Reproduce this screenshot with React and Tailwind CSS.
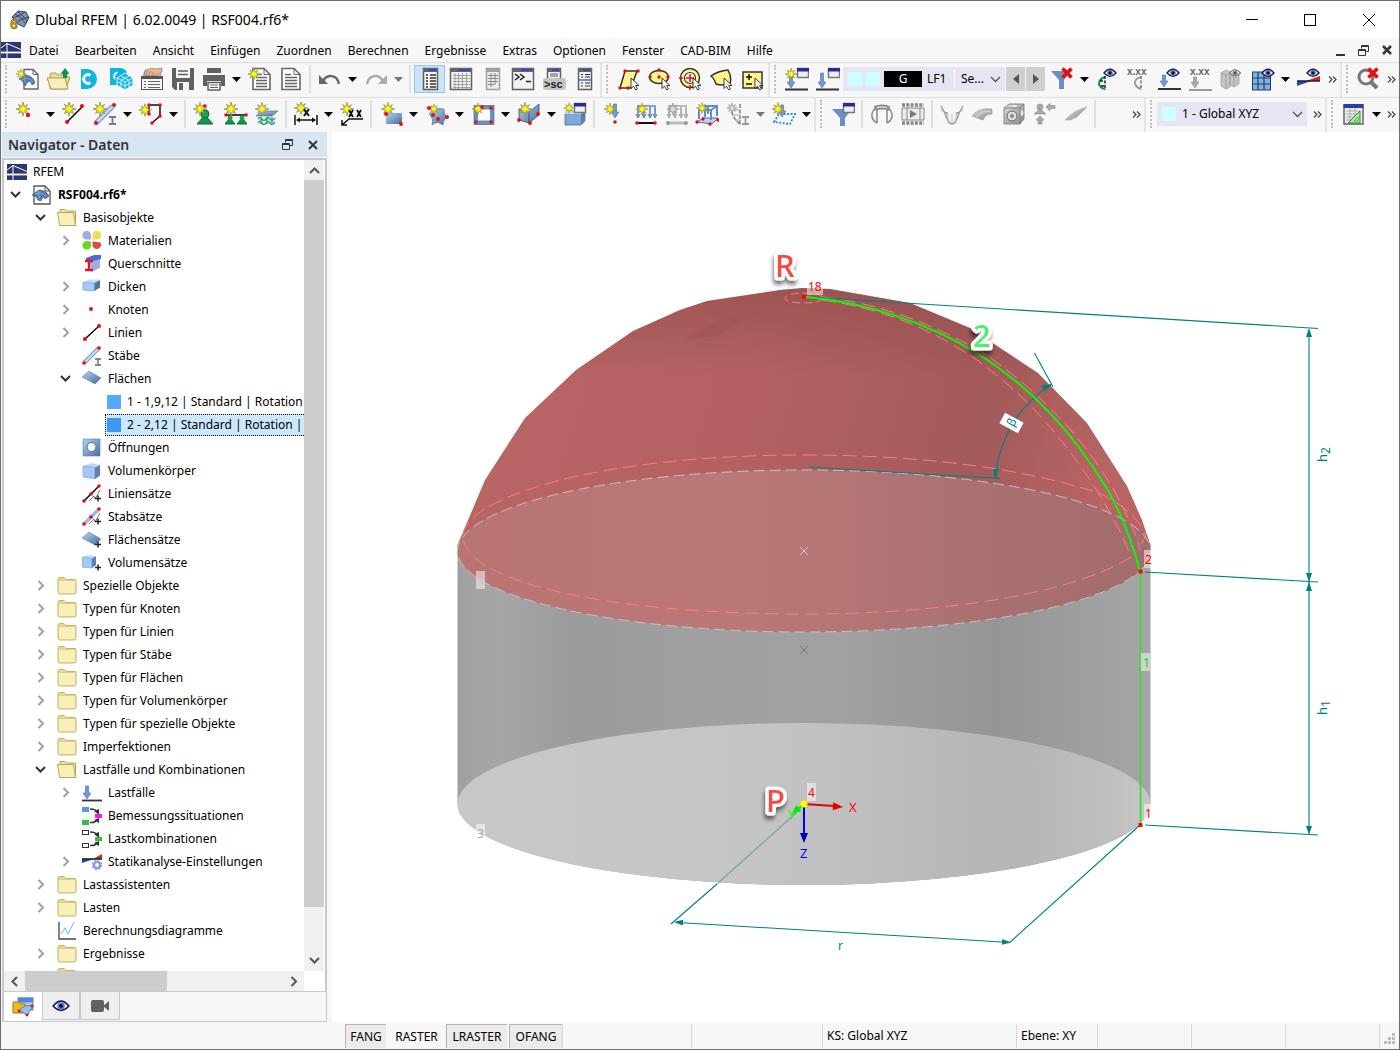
import React, { useState } from 'react';

const BLUE = 'url(#blue)';
const GRAY = 'url(#gray)';

/* ---------- shared icon parts ---------- */

const Star = ({ x = 7, y = 7, s = 1, gray }) => (
  <g transform={`translate(${x} ${y}) scale(${s})`}>
    <path
      d="M0-7.500 1.100-2.800 4.800-4.800 2.800-1.100 7.500 0 2.800 1.100 4.800 4.800 1.100 2.800 0 7.500-1.100 2.800-4.800 4.800-2.800 1.100-7.500 0-2.800-1.100-4.800-4.800-1.100-2.800Z"
      fill={gray ? '#c8c8c8' : '#e8df30'}
      stroke={gray ? '#8a8a8a' : '#8a8a4c'}
      strokeWidth=".8"
    />
    <path d="M0-4 1.300-1.300 4 0 1.300 1.300 0 4-1.300 1.300-4 0-1.300-1.300Z" fill={gray ? '#ddd' : '#ffff00'} />
  </g>
);

const Dots = ({ at, c = '#e80c0c', r = 2 }) => at.map(([x, y]) => <circle key={`${x}-${y}`} cx={x} cy={y} r={r} fill={c} />);

const MiniWin = ({ x = 13, y = 1 }) => (
  <g>
    <rect x={x + 0.5} y={y + 0.5} width="11" height="9" fill="#eee" stroke="#777" strokeWidth="1.500" />
    <rect x={x} y={y} width="12" height="3.500" fill="#2a2a9c" />
  </g>
);

const Eye = ({ x = 15, y = 6, s = 1, gray }) => (
  <g transform={`translate(${x} ${y}) scale(${s})`}>
    <path d="M-6 0Q0-7.5 6 0Q0 6.5-6 0Z" fill="#fff" stroke={gray ? '#7d7d7d' : '#1c1c5e'} strokeWidth="1.4" />
    <circle r="2.9" fill={gray ? '#8b8b8b' : '#5b78c8'} />
    <circle r="1.4" fill={gray ? '#555' : '#000'} />
  </g>
);

const Pointer = ({ x = 14, y = 11 }) => (
  <path transform={`translate(${x} ${y})`} d="M0 0V10.5L2.6 8.2 4.6 12 6.4 11 4.6 7.5H8Z" fill="#fff" stroke="#111" strokeWidth=".8" />
);

const Down = ({ x = 8, y1 = 5, y2 = 20, gray }) => (
  <path
    d={`M${x - 1.5} ${y1}h3V${y2 - 6}h2.4L${x} ${y2}l-3.9-6h2.4Z`}
    fill={gray ? '#aaa' : '#6f9ad4'}
    stroke={gray ? '#888' : '#4a6faa'}
    strokeWidth=".6"
  />
);

const IBeam = ({ x = 17, y = 14, c = '#6b7f9c' }) => (
  <path d={`M${x} ${y + 1}h7M${x} ${y + 8}h7M${x + 3.5} ${y + 1}v7`} stroke={c} strokeWidth="1.8" fill="none" />
);

const Page = ({ x = 3, y = 2, w = 18 }) => (
  <g stroke="#666" fill="none">
    <path d={`M${x} ${y}h${w - 6}l6 6v15h-${w}Z`} fill="#fff" strokeWidth="1.6" />
    <path d={`M${x + w - 6} ${y}v6h6`} />
    <path d={`M${x + 3} ${y + 6}h6M${x + 3} ${y + 9}h${w - 6}M${x + 3} ${y + 12}h${w - 6}M${x + 3} ${y + 15}h${w - 6}M${x + 3} ${y + 18}h${w - 6}`} strokeWidth="1.3" />
  </g>
);

const Win = ({ x = 1, w = 22, h = 22, gray, children }) => (
  <g>
    <rect x={x + 0.5} y="1.5" width={w - 1} height={h - 1} fill={gray ? '#ececec' : '#f2f2f2'} stroke={gray ? '#a0a0a0' : '#606060'} strokeWidth="1.500" />
    <rect x={x} y="1" width={w} height="4" fill={gray ? '#a0a0a0' : '#666'} />
    {!gray && <rect x={x + w / 2 - 2} y="2" width={w / 2} height="2" fill="#3344d8" />}
    {children}
  </g>
);

const RedX = ({ x = 16, y = 6 }) => (
  <path d={`M${x - 4.5} ${y - 4.5}l9 9M${x + 4.5} ${y - 4.5}l-9 9`} stroke="#e60e0e" strokeWidth="3.6" />
);

const Funnel = ({ y = 4 }) => <path d={`M1 ${y}H21L14 ${y + 9}V${y + 18}H9V${y + 9}Z`} fill="#6b8fc4" />;

/* ---------- toolbar icons, 24 x 24 ---------- */

const icons = {
  newModel: (
    <g>
      <path d="M8 2.500h9l5 5V22H8Z" fill="#fff" stroke="#666" strokeWidth="1.4" />
      <path d="M17 2.500v5h5" fill="none" stroke="#666" />
      <path d="M3 12 10 8Q17 9 19 16L16 18 15 15Q13 13 11 16L9 19 7 15Q5 12 3 12Z" fill="#4d7cb0" stroke="#274a74" strokeWidth=".6" />
      <path d="M6 13Q12 9 17 15M9 9Q7 12 10 17" fill="none" stroke="#8fb4dc" strokeWidth=".7" />
      <Star x={5} y={7} s={0.7} />
    </g>
  ),
  open: (
    <g>
      <path d="M3 8V22H19L23 10H20V8H11L9 6H4Z" fill="#e9dc9a" stroke="#a89a4c" />
      <path d="M0 11H18L21 22H4Z" fill="#f7efb8" stroke="#a89a4c" />
      <path d="M16 11V7H13.500L18 1l4.500 6H20V11Z" fill="#0b9242" />
    </g>
  ),
  dlubal: (
    <g>
      <path d="M3 2H9A10 10 0 0 1 9 22H3Z" fill="#0db5e0" />
      <path d="M12.500 8.500A4.300 4.300 0 1 0 12.500 15.500" fill="none" stroke="#fff" strokeWidth="2.800" />
    </g>
  ),
  dlubalCube: (
    <g>
      <path d="M1 1H12Q17 2 18 6L12 14V18H1Z" fill="#0db5e0" />
      <path d="M8.500 5.500A4 4 0 0 0 6 12" fill="none" stroke="#fff" strokeWidth="2" />
      <path d="M16 6 20 8.500 24 11V18L16 23 8 18V11Z" fill="#0db5e0" stroke="#fff" strokeWidth=".8" />
      <path d="M8 11l8 4 8-4M16 15v8M12 9l8 4.500v7M20 9l-8 4.500v7M8 14.500l8 4.500 8-4.500" fill="none" stroke="#fff" strokeWidth=".8" />
    </g>
  ),
  manager: (
    <g>
      <path d="M3 10 5 3h15l1 7Z" fill="#a9c2df" stroke="#667" strokeWidth=".5" />
      <path d="M4 8C5 3 10 0 16 2L22 1V5L17 8 11 9Z" fill="#e8b899" stroke="#9a6a50" strokeWidth=".6" />
      <path d="M8 4l-2 4M11 4l-2 4M14 5l-2 3" stroke="#9a6a50" strokeWidth=".7" />
      <rect x="1.500" y="9.500" width="21" height="13" fill="#f4f4f4" stroke="#555" />
      <rect x="1" y="9" width="22" height="3" fill="#555" />
      <path d="M4 14.500h2M4 17.500h2M4 20.500h2M8 14.500h12M8 17.500h12M8 20.500h12" stroke="#666" strokeWidth="1.200" />
    </g>
  ),
  save: (
    <g>
      <path d="M1 1H4V12H20V1H23V23H4L1 20Z" fill="#606060" />
      <path d="M4 1H20V12H4Z" fill="#606060" />
      <rect x="5" y="1" width="14" height="10" fill="#f6f6f6" />
      <path d="M7 4h10M7 7.500h10" stroke="#606060" strokeWidth="1.600" />
      <rect x="6" y="15" width="12" height="8" fill="#f6f6f6" />
      <rect x="8" y="16" width="4" height="7" fill="#606060" />
    </g>
  ),
  print: (
    <g fill="#606060">
      <rect x="5" y="1" width="14" height="5" />
      <path d="M1 8H23V19H19V14H5V19H1Z" />
      <path d="M6 15.500H18V23H6Z" fill="#fff" stroke="#606060" strokeWidth="1.500" />
      <path d="M8 18h8M8 20.500h8" stroke="#606060" />
    </g>
  ),
  newReport: (
    <g>
      <Page x={5} y={1.500} w={17} />
      <Star x={6} y={7} s={0.85} />
    </g>
  ),
  report: <Page x={3} y={1.500} w={18} />,
  undo: (
    <g>
      <path d="M5 14C9 7 19 7 21 17" fill="none" stroke="#666" strokeWidth="2.400" />
      <path d="M1 8V17H10Z" fill="#666" />
    </g>
  ),
  redo: (
    <g>
      <path d="M19 14C15 7 5 7 3 17" fill="none" stroke="#aaa" strokeWidth="2.400" />
      <path d="M23 8V17H14Z" fill="#aaa" />
    </g>
  ),
  winNav: (
    <Win x={5} w={15}>
      <path d="M8 8h2M8 11h2M8 14h2M8 17h2M8 20h2M12 8h6M12 11h6M12 14h6M12 17h6M12 20h6" stroke="#333" strokeWidth="1.300" />
    </Win>
  ),
  winTable: (
    <Win>
      <path d="M4 8.500h17M4 11.500h17M4 14.500h17M4 17.500h17M4 20.500h17M6 6v16M9.500 6v16M13.500 6v16M17.500 6v16" stroke="#999" strokeWidth=".9" />
    </Win>
  ),
  winGray: (
    <Win x={6} w={14} gray>
      <path d="M8 8.500h10M8 11.500h10M8 14.500h10M8 17.500h6M11 6v14M15 6v12" stroke="#888" />
    </Win>
  ),
  winConsole: (
    <Win>
      <path d="M4 7l4 3-4 3M9 7l4 3-4 3M15 14.500h5" fill="none" stroke="#222" strokeWidth="1.500" />
    </Win>
  ),
  winScript: (
    <g>
      <Win x={5} w={14} h={18}>
        <path d="M8 7h8M8 9h8" stroke="#555" />
      </Win>
      <rect x="1" y="11" width="23" height="12" rx="3" fill="#c4c4c4" />
      <text x="2" y="21" fontSize="11" fontWeight="700" fontFamily="Liberation Sans, sans-serif" fill="#222">&gt;sc</text>
    </g>
  ),
  winList: (
    <Win x={5} w={14}>
      <path d="M8 7.500h2M8 10h2M8 16h2M8 19h2M12 7.500h5M12 10h5M12 16h5M12 19h5" stroke="#333" strokeWidth="1.200" />
      <path d="M5 13h14" stroke="#3a6ad0" strokeWidth="1.500" />
    </Win>
  ),
  selRhomb: (
    <g>
      <path d="M3 21 8 4H20L14 21Z" fill="#fdf58c" stroke="#333" strokeWidth="1.500" />
      <Dots at={[[3, 21], [8, 4], [21, 4], [11, 21]]} r={1.7} />
      <Pointer />
    </g>
  ),
  selEllipse: (
    <g>
      <ellipse cx="11" cy="10" rx="9.500" ry="6.500" fill="#fdf58c" stroke="#333" strokeWidth="1.500" />
      <Dots at={[[2, 10], [11, 3], [11, 10], [20, 10]]} r={1.7} />
      <Pointer />
    </g>
  ),
  selRing: (
    <g>
      <circle cx="11" cy="11" r="9.500" fill="#fdf58c" stroke="#333" strokeWidth="1.500" />
      <circle cx="11" cy="11" r="5.500" fill="#fff" stroke="#333" strokeWidth="1.200" />
      <path d="M7 11h8M11 7v8M0 11h4M11 18v5" stroke="#e80c0c" strokeWidth="1.500" />
      <Pointer />
    </g>
  ),
  selLasso: (
    <g>
      <path d="M1 9Q8 4 18 3Q22 10 20 17Q12 19 6 17Q4 11 1 9Z" fill="#fdf58c" stroke="#333" strokeWidth="1.500" />
      <Pointer />
    </g>
  ),
  selCalc: (
    <g>
      <rect x="2" y="5" width="19" height="16" fill="#fdf58c" stroke="#333" strokeWidth="1.500" />
      <path d="M5 10h6M8 7v6M5 17h6" stroke="#111" strokeWidth="1.500" />
      <Pointer />
    </g>
  ),
  newLoadCase: (
    <g>
      <MiniWin x={12} y={1} />
      <Down x={6} y1={6} y2={21} />
      <Star x={6} y={7} s={0.8} />
      <rect x="0" y="21.500" width="23" height="2" fill="#333" />
    </g>
  ),
  loadCase: (
    <g>
      <MiniWin x={12} y={1} />
      <Down x={6} y1={6} y2={21} />
      <rect x="0" y="21.500" width="23" height="2" fill="#333" />
    </g>
  ),
  filterOff: (
    <g>
      <Funnel />
      <RedX x={17} y={6} />
    </g>
  ),
  showResult: (
    <g>
      <path d="M9 10Q3 12 3 17Q4 21 9 22" fill="none" stroke="#0b9242" strokeWidth="2" />
      <path d="M9 9V23M4 14h5M5 19h4" stroke="#222" strokeWidth="1.500" strokeDasharray="3 1.500" />
      <Eye x={14} y={6} />
    </g>
  ),
  xxxResult: (
    <g>
      <text x="0" y="8" fontSize="10" fontWeight="700" fontFamily="Liberation Sans, sans-serif" fill="#666">x.xx</text>
      <path d="M14 10Q7 12 8 17Q10 21 14 22" fill="none" stroke="#999" strokeWidth="1.800" />
      <path d="M14 9V23" stroke="#777" strokeWidth="1.600" strokeDasharray="3 1.500" />
    </g>
  ),
  showLoads: (
    <g>
      <Down x={6} y1={8} y2={20} />
      <Eye x={15} y={6} />
      <rect x="0" y="21" width="23" height="2" fill="#333" />
    </g>
  ),
  xxxLoads: (
    <g>
      <text x="1" y="8" fontSize="10" fontWeight="700" fontFamily="Liberation Sans, sans-serif" fill="#666">x.xx</text>
      <Down x={6} y1={10} y2={21} gray />
      <rect x="0" y="22" width="23" height="2" fill="#999" />
    </g>
  ),
  showBlocks: (
    <g>
      <path d="M1 6 6 3 10 5V20L6 22 1 19ZM10 8 14 5 19 8V17L14 20 10 18Z" fill="#c4c4c4" stroke="#999" strokeWidth=".7" />
      <path d="M6 8V22M1 6 6 8 10 6M14 10V20" fill="none" stroke="#999" strokeWidth=".8" />
      <Eye x={15} y={6} gray s={0.9} />
    </g>
  ),
  showMesh: (
    <g>
      <rect x="1.500" y="5" width="18" height="18" fill="#7fb2e0" stroke="#1e3f6a" />
      <path d="M7 5v18M13 5v18M1 11h18M1 17h18" stroke="#1e3f6a" strokeWidth="1.200" />
      <Eye x={17} y={6} />
    </g>
  ),
  showDiagram: (
    <g>
      <path d="M9 14 23 9V14Z" fill="#cc2a1a" />
      <path d="M0 14H14L0 19Z" fill="#2546b8" />
      <path d="M0 14H23" stroke="#222" strokeWidth="1.500" />
      <Eye x={16} y={6} />
    </g>
  ),
  searchOff: (
    <g>
      <circle cx="9" cy="10" r="7" fill="none" stroke="#777" strokeWidth="3" />
      <path d="M14 15 20 21" stroke="#777" strokeWidth="4" />
      <RedX x={16} y={6} />
    </g>
  ),

  node: (
    <g>
      <Star x={7} y={7} s={0.95} />
      <Dots at={[[12, 13]]} r={2.2} />
    </g>
  ),
  line: (
    <g>
      <path d="M5 20 20 5" stroke="#111" strokeWidth="1.600" />
      <Star x={7} y={7} s={0.95} />
      <Dots at={[[5, 20], [20, 4]]} />
    </g>
  ),
  member: (
    <g>
      <path d="M3 21 20 4" stroke="#6f8fc0" strokeWidth="5" />
      <path d="M3 21 20 4" stroke="#c4d8f4" strokeWidth="3" />
      <Star x={7} y={7} s={0.95} />
      <Dots at={[[3, 21], [21, 3]]} />
      <IBeam x={16} y={14} />
    </g>
  ),
  polyline: (
    <g>
      <path d="M10 11V3H21V14L13 21" fill="none" stroke="#111" strokeWidth="1.500" />
      <Star x={6} y={8} s={0.85} />
      <Dots at={[[10, 12], [10, 3], [21, 3], [21, 14], [13, 21]]} r={1.8} />
    </g>
  ),
  nodeSupport: (
    <g>
      <path d="M12 13 20 22H4Z" fill="#12984a" stroke="#0a6a30" />
      <circle cx="12" cy="12" r="4" fill="#18a552" stroke="#0a6a30" />
      <Star x={7} y={7} s={0.9} />
      <Dots at={[[12, 4]]} r={1.8} />
    </g>
  ),
  lineSupport: (
    <g>
      <path d="M1 13H22" stroke="#111" strokeWidth="1.600" />
      <path d="M6 16 11 22H1ZM18 16 23 22H13Z" fill="#12984a" stroke="#0a6a30" />
      <circle cx="6" cy="16" r="2.500" fill="#18a552" />
      <circle cx="18" cy="16" r="2.500" fill="#18a552" />
      <Star x={7} y={7} s={0.95} />
      <Dots at={[[2, 13], [22, 13]]} r={1.8} />
    </g>
  ),
  surfSupport: (
    <g>
      <path d="M1 14 8 9H23L17 14Z" fill={BLUE} stroke="#45698f" strokeWidth=".6" />
      <path d="M3 17q2-3 4 0t4 0 4 0 5-1M3 21q2-3 4 0t4 0 4 0 5-1M6 15v7M12 15v7M17 15v6" fill="none" stroke="#2aa578" strokeWidth="1.500" />
      <Star x={7} y={7} s={0.9} />
    </g>
  ),
  dimX: (
    <g>
      <path d="M1 13V23M23 13V23M3 18H21" stroke="#111" strokeWidth="1.500" />
      <path d="M2 18l4-2.500v5ZM22 18l-4-2.500v5Z" fill="#111" />
      <Star x={7} y={6} s={0.9} />
      <path d="M10 7l5 7M15 7l-5 7" stroke="#111" strokeWidth="2" />
    </g>
  ),
  dimXX: (
    <g>
      <path d="M23 17H9L2 23M2 18v5h5" fill="none" stroke="#111" strokeWidth="1.500" />
      <Star x={7} y={7} s={0.9} />
      <path d="M9 8l4 7M13 8l-4 7M17 8l4 7M21 8l-4 7" stroke="#111" strokeWidth="1.800" />
    </g>
  ),
  surface: (
    <g>
      <rect x="7" y="11" width="16" height="11" fill={BLUE} />
      <Star x={9} y={7} s={0.9} />
      <Dots at={[[7, 12], [22, 22]]} r={1.9} />
    </g>
  ),
  surfaceCurved: (
    <g>
      <path d="M4 12Q9 5 19 7Q18 12 23 15Q18 17 18 23Q12 18 7 23Q9 16 4 12Z" fill={BLUE} stroke="#3d5f8d" strokeWidth=".6" />
      <Star x={9} y={7} s={0.7} />
      <Dots at={[[4, 6], [8, 13], [22, 15], [13, 17]]} r={2} />
    </g>
  ),
  openingFrame: (
    <g>
      <rect x="5" y="5.500" width="16" height="15" fill="#fff" stroke="#6d8fc0" strokeWidth="4" />
      <rect x="3" y="3.500" width="20" height="19" fill="none" stroke="#3d5f8d" strokeWidth=".6" />
      <Star x={7} y={7} s={0.8} />
      <Dots at={[[5, 20], [20, 6], [20, 20], [11, 5]]} r={1.8} />
    </g>
  ),
  surfaceBent: (
    <g>
      <path d="M2 8 12 10 22 2V13L12 21 2 18Z" fill={BLUE} stroke="#334d73" strokeWidth=".8" />
      <path d="M12 10V21" stroke="#334d73" />
      <Star x={8} y={7} s={0.9} />
      <Dots at={[[2, 18], [13, 21], [21, 12]]} r={1.9} />
    </g>
  ),
  solid: (
    <g>
      <path d="M2 12 6 9H22V19L18 23H2Z" fill="#7fa8da" stroke="#40659a" strokeWidth=".7" />
      <path d="M2 12H18L22 9H6Z" fill="#c3dbf5" />
      <path d="M18 12V23L22 19V9Z" fill="#5b7fb0" />
      <Star x={6} y={6} s={0.7} />
      <MiniWin x={11} y={1} />
    </g>
  ),
  nodalLoad: (
    <g>
      <Down x={13} y1={2} y2={16} />
      <Star x={8} y={7} s={0.8} />
      <Dots at={[[13, 20]]} r={1.8} />
    </g>
  ),
  lineLoad: (
    <g>
      <path d="M5 14V4H22V14M11 5V14M17 5V14" fill="none" stroke="#5f8cc8" strokeWidth="1.700" />
      <path d="M3 12l2 4 2-4M9 12l2 4 2-4M15 12l2 4 2-4M20 12l2 4 2-4" fill="none" stroke="#4a6faa" />
      <Star x={9} y={7} s={0.8} />
      <path d="M3 21H22" stroke="#111" strokeWidth="2" />
      <Dots at={[[4, 21], [22, 21]]} r={1.8} />
    </g>
  ),
  memberLoad: (
    <g>
      <path d="M5 14V4H22V14M11 5V14M17 5V14" fill="none" stroke="#aaa" strokeWidth="1.700" />
      <path d="M3 12l2 4 2-4M9 12l2 4 2-4M15 12l2 4 2-4M20 12l2 4 2-4" fill="none" stroke="#999" />
      <Star x={9} y={7} s={0.8} gray />
      <path d="M3 21H22" stroke="#bbb" strokeWidth="3" />
      <Dots at={[[4, 21], [22, 21]]} r={2} c="#999" />
    </g>
  ),
  surfLoad: (
    <g>
      <path d="M2 20 8 16H23L17 22Z" fill="#bcd2ee" stroke="#4a6faa" />
      <path d="M4 17V8L9 4H22V14M4 8H16L22 4M16 8V18M10 8V15M13 4V12" fill="none" stroke="#5f8cc8" strokeWidth="2" />
      <Star x={7} y={6} s={0.75} />
      <Dots at={[[2, 20], [23, 18], [15, 22], [8, 17]]} r={1.7} />
    </g>
  ),
  imperfection: (
    <g>
      <path d="M6 4Q4 14 14 22M14 2V23" fill="none" stroke="#888" strokeWidth="1.600" strokeDasharray="4 1.500" />
      <path d="M6 8h8M7 13h7M9 18h5" stroke="#aaa" />
      <Star x={6} y={6} s={0.7} gray />
      <IBeam x={16} y={14} c="#999" />
    </g>
  ),
  freeLoad: (
    <g>
      <path d="M2 20 7 12H23L18 22Z" fill="none" stroke="#1b93d8" strokeWidth="1.800" strokeDasharray="2 1.500" />
      <Down x={10} y1={3} y2={15} />
      <Star x={6} y={7} s={0.85} />
    </g>
  ),
  filterWin: (
    <g>
      <Funnel y={7} />
      <MiniWin x={12} y={1} />
    </g>
  ),
  jaw: (
    <g fill="none" stroke="#888" strokeWidth="1.500">
      <path d="M7 21V7M17 21V7" />
      <path d="M7 5Q1 9 2 15Q3 19 7 21M17 5Q23 9 22 15Q21 19 17 21" />
      <path d="M4 5Q12 2 20 5M4 8Q12 5 20 8" strokeWidth="1.800" />
    </g>
  ),
  film: (
    <g>
      <path d="M1 3H23M1 21H23" stroke="#888" strokeWidth="3.500" strokeDasharray="3 1.300" />
      <path d="M1 6H23V18H1Z" fill="#ececec" stroke="#888" />
      <path d="M6 6v12M19 6v12" stroke="#888" />
      <path d="M9 8V16L16 12Z" fill="#777" />
    </g>
  ),
  curve: (
    <g fill="none" stroke="#999" strokeWidth="1.500">
      <path d="M1 4 5 11H8M23 4 19 11H16M5 11Q8 22 12 22T19 11" />
      <path d="M2 4v6M22 4v6M8 12v7M12 12v9M16 12v7" strokeWidth=".9" stroke="#b5b5b5" />
    </g>
  ),
  bent: (
    <g>
      <path d="M1 14Q8 5 21 7V12Q14 12 12 18Z" fill={GRAY} stroke="#999" strokeWidth=".6" />
      <path d="M5 15Q11 8 20 10" fill="none" stroke="#ddd" />
    </g>
  ),
  die: (
    <g>
      <path d="M2 6 7 2H22V17L18 22H2Z" fill={GRAY} stroke="#777" strokeWidth=".8" />
      <path d="M2 6H18V22M18 6 22 2" fill="none" stroke="#777" strokeWidth=".8" />
      <circle cx="10" cy="14" r="5" fill="#ddd" stroke="#666" />
      <circle cx="10" cy="14" r="2" fill="#888" />
      <ellipse cx="20" cy="11" rx="1.300" ry="3" fill="#eee" />
      <ellipse cx="12" cy="4" rx="3" ry="1" fill="#eee" />
    </g>
  ),
  supportMove: (
    <g fill="#aaa" stroke="#888" strokeWidth=".6">
      <circle cx="7" cy="5" r="3" />
      <path d="M7 7 13 12H1ZM7 14l4 4H9v4H5V18H3ZM13 5l4-3.500v2h5v3H17V9Z" />
    </g>
  ),
  wing: <path d="M1 18Q10 8 23 5L14 14Q11 17 10 16L7 18Z" fill={GRAY} stroke="#aaa" strokeWidth=".6" />,
  units: (
    <g>
      <rect x="2" y="3" width="19" height="19" fill="#eee" stroke="#666" strokeWidth="1.500" />
      <rect x="1.500" y="2" width="20" height="4" fill="#2a3cb0" />
      <path d="M4 9h14M4 12h14M4 15h14M4 18h14M8 6v15M13 6v15" stroke="#aaa" />
      <path d="M6 21H18V9Z" fill="#a9f09a" stroke="#2d8a2d" />
      <path d="M12 19H16V15Z" fill="#eee" stroke="#2d8a2d" strokeWidth=".7" />
    </g>
  ),
};

/* ---------- toolbar building blocks ---------- */

// entry kinds: icon name, 'v' = drop-down arrow, 'V' = disabled arrow, '|' = separator
const ToolItem = ({ item, active }) => {
  if (item === '|') return <span className="mx-[3px] h-7 w-[2px] shrink-0 bg-[#e0e0e0]" />;
  if (item === 'v' || item === 'V') {
    return (
      <button aria-label="Mehr" className="flex h-7 w-[15px] shrink-0 items-center justify-center">
        <svg width="9" height="5" viewBox="0 0 9 5"><path d="M0 0H9L4.500 5Z" fill={item === 'v' ? '#000' : '#777'} /></svg>
      </button>
    );
  }
  return (
    <button
      aria-label={item}
      className={`flex h-7 w-[31px] shrink-0 items-center justify-center ${active ? 'border border-[#90c8f6] bg-[#cce4f7]' : ''}`}
    >
      <svg width="24" height="24" viewBox="0 0 24 24" className="shrink-0">{icons[item]}</svg>
    </button>
  );
};

const Tools = ({ list, active }) => list.split(' ').map((item, i) => <ToolItem key={i} item={item} active={item === active} />);

const Handle = () => <span className="mr-[3px] ml-1 h-7 w-1 shrink-0 border-l-2 border-dotted border-[#bdbdbd]" />;

const More = () => (
  <button aria-label="Weitere" className="flex h-7 w-[15px] shrink-0 items-center justify-center">
    <svg width="9" height="7" viewBox="0 0 9 7" fill="none" stroke="#444" strokeWidth="1.2"><path d="M1 .5 4 3.500 1 6.500M5 .5 8 3.500 5 6.500" /></svg>
  </button>
);

const Chevron = ({ d, className = 'text-[#555]', size = 11, w = 2 }) => (
  <svg width={size} height={size} viewBox="0 0 11 11" fill="none" stroke="currentColor" strokeWidth={w} className={className}>
    <path d={{ down: 'M1 3 5.500 7.500 10 3', up: 'M1 8 5.500 3.500 10 8', right: 'M3.500 1 8 5.500 3.500 10', left: 'M8 1 3.500 5.500 8 10' }[d]} />
  </svg>
);

const toolbar = 'flex h-[35px] shrink-0 border-t border-[#dedede]';
const group = 'flex items-center border-r-2 border-[#e4e4e4] pb-[2px]';

const ToolbarTop = () => (
  <div className={toolbar}>
    <div className={group}>
      <Handle />
      <Tools list="newModel open dlubal dlubalCube manager save print v newReport report | undo v redo V | winNav winTable winGray winConsole winScript winList" active="winNav" />
    </div>
    <div className={group}>
      <Handle />
      <Tools list="selRhomb selEllipse selRing selLasso selCalc" />
    </div>
    <div className={`${group} min-w-0 flex-1`}>
      <Handle />
      <Tools list="newLoadCase loadCase" />
      <div className="flex h-6 w-[162px] shrink-0 items-center bg-[#e6e6f2] pl-[5px]">
        <span className="mr-1 size-[14px] bg-[#ccffff]" />
        <span className="mr-1 size-[14px] bg-[#ccffff]" />
        <span className="h-4 w-[38px] bg-black text-center text-xs leading-4 text-white">G</span>
        <span className="w-8 pl-[5px]">LF1</span>
        <label className="relative flex h-[18px] flex-1 items-center border-l border-white">
          <select aria-label="Lastfall" className="w-full appearance-none bg-transparent pl-[6px] outline-none">
            <option>Se...</option>
          </select>
          <Chevron d="down" w={1.3} className="pointer-events-none absolute right-1 text-[#555]" />
        </label>
      </div>
      <button aria-label="Vorheriger" className="ml-px flex h-6 w-[19px] shrink-0 items-center justify-center bg-[#cfcfcf]">
        <svg width="6" height="10" viewBox="0 0 6 10"><path d="M6 0V10L0 5Z" fill="#555" /></svg>
      </button>
      <button aria-label="Nächster" className="mr-px ml-px flex h-6 w-[19px] shrink-0 items-center justify-center bg-[#cfcfcf]">
        <svg width="6" height="10" viewBox="0 0 6 10"><path d="M0 0V10L6 5Z" fill="#555" /></svg>
      </button>
      <Tools list="filterOff v showResult xxxResult showLoads xxxLoads showBlocks showMesh v showDiagram" />
      <span className="ml-auto"><More /></span>
    </div>
    <div className="flex items-center pb-[2px]">
      <Handle />
      <Tools list="searchOff" />
      <More />
    </div>
  </div>
);

const ToolbarBottom = () => (
  <div className={toolbar}>
    <div className={group}>
      <Handle />
      <Tools list="node v line member v polyline v | nodeSupport lineSupport surfSupport | dimX v dimXX | surface v surfaceCurved v openingFrame v surfaceBent v solid | nodalLoad lineLoad memberLoad surfLoad imperfection V freeLoad v" />
    </div>
    <div className={`${group} min-w-0 flex-1`}>
      <Handle />
      <Tools list="filterWin | jaw film | curve bent die supportMove wing |" />
      <span className="ml-auto"><More /></span>
    </div>
    <div className={group}>
      <Handle />
      <label className="relative mr-[3px] flex h-6 w-[150px] items-center bg-[#e6e6f2] pl-[5px]">
        <span className="size-[14px] shrink-0 bg-[#ccffff]" />
        <select aria-label="Koordinatensystem" className="w-full appearance-none bg-transparent pl-[6px] outline-none">
          <option>1 - Global XYZ</option>
        </select>
        <Chevron d="down" w={1.3} className="pointer-events-none absolute right-1 text-[#555]" />
      </label>
      <More />
    </div>
    <div className="flex items-center pb-[2px]">
      <Handle />
      <Tools list="units v" />
      <More />
    </div>
  </div>
);

/* ---------- navigator tree, icons 20 x 20 ---------- */

const Logo = () => (
  <g>
    <rect y="2" width="20" height="16" fill="#2b3674" />
    <path d="M0 12.500H20" stroke="#fff" strokeWidth="1.800" />
    <path d="M6 3V18M0 8 6 3.500 20 9.500" fill="none" stroke="#fff" />
  </g>
);

const PlusMark = () => <path d="M16 11.500v6M13 14.500h6" stroke="#222" strokeWidth="1.500" />;

const treeIcons = {
  logo: <Logo />,
  file: (
    <g>
      <path d="M2 1H13L18 6V19H2Z" fill="#fff" stroke="#555" strokeWidth="1.300" />
      <path d="M13 1V6H18" fill="none" stroke="#555" />
      <path d="M0 10 7 5Q14 5 17 11L13 14 12 12Q10 12 9 16L6 15Q5 11 0 10Z" fill="#4d7cb0" stroke="#274a74" strokeWidth=".6" />
      <path d="M3 9Q10 6 14 12M7 6Q5 9 8 14" fill="none" stroke="#9cc0e6" strokeWidth=".8" />
    </g>
  ),
  folder: (
    <g>
      <path d="M1 3Q1 1.500 3 1.500H7L9 3.500H18Q19 3.500 19 5V16Q19 18 17 18H2.500Q1 18 1 16Z" fill="#e6d98e" stroke="#c3b566" />
      <rect x="1.500" y="4.500" width="17" height="13" rx="1" fill="#f9f0b8" stroke="#d2c67c" strokeWidth=".7" />
    </g>
  ),
  folderOpen: (
    <g>
      <path d="M3 1.500H8L9.500 3H18.500V17H4Z" fill="#efe3a0" stroke="#b5a755" />
      <path d="M.5 4.500H16.500L18.500 17.500H2.500Z" fill="#f9f0b8" stroke="#b5a755" />
    </g>
  ),
  materials: (
    <g>
      <path d="M9 8.500H5A4.300 4.300 0 1 1 9 4Z" fill="#9daaea" />
      <path d="M10.500 8.500V4.500A4.300 4.300 0 1 1 15 8.500Z" fill="#e8e04e" />
      <path d="M9 10.500V14.500A4.300 4.300 0 1 1 5 10Z" fill="#6bd81e" />
      <path d="M10.500 10.500 18.500 11.500A4.300 4.300 0 1 1 10.500 14Z" fill="#e54545" />
    </g>
  ),
  section: (
    <g>
      <path d="M8 6 18 1V14L9 18Z" fill="#9aaee8" />
      <path d="M4 4 12 1H19V5L10 7H4Z" fill="#4e68d0" />
      <path d="M3 7H11M3 16H11M7 7V16" stroke="#dc1818" strokeWidth="2.400" />
    </g>
  ),
  thickness: (
    <g>
      <path d="M1 5 7 2.500H18L13 6Z" fill="#c7dcf4" />
      <path d="M1 5.500 12.500 6V14L1 13Z" fill="#a3cbf7" stroke="#6c93c2" strokeWidth=".6" />
      <path d="M12.500 6 18 3V10.500L12.500 14Z" fill="#54729f" />
    </g>
  ),
  knot: <circle cx="9" cy="9" r="1.9" fill="#e01010" />,
  line: (
    <g>
      <path d="M3 16 17 3" stroke="#000" strokeWidth="1.400" />
      <Dots at={[[3, 16], [17, 3]]} r={2} />
    </g>
  ),
  member: (
    <g>
      <path d="M2 17 17 2" stroke="#6f8fc0" strokeWidth="4" />
      <path d="M2 17 17 2" stroke="#c4d8f4" strokeWidth="2.400" />
      <Dots at={[[2, 17], [17, 2]]} r={1.8} />
      <path d="M13 13h6M13 19h6M16 13v6" stroke="#666" strokeWidth="1.300" />
    </g>
  ),
  surface: <path d="M0 8 7 2 19 9 13 15Z" fill={BLUE} stroke="#56789f" strokeWidth=".5" />,
  opening: (
    <g>
      <rect x="1" y="1" width="17" height="17" fill={BLUE} stroke="#5e83ad" strokeWidth=".6" />
      <circle cx="9.500" cy="9" r="4.500" fill="#fff" stroke="#4a6a92" />
    </g>
  ),
  solid: (
    <g>
      <path d="M1 5 9 2 18 4 13 7Z" fill="#bfdaf8" />
      <path d="M1 5 13 6.500V18L1 16Z" fill="#a3c8f5" stroke="#6c93c2" strokeWidth=".5" />
      <path d="M13 6.500 18 4V14.500L13 18Z" fill="#5f7fb0" />
    </g>
  ),
  lineSet: (
    <g>
      <path d="M2 17 17 2" stroke="#000" strokeWidth="1.500" />
      <path d="M7 17 12 12 13 15 18 6" fill="none" stroke="#777" />
      <Dots at={[[2, 17], [9, 10], [17, 2]]} r={1.8} />
      <PlusMark />
    </g>
  ),
  memberSet: (
    <g>
      <path d="M2 17 17 2" stroke="#9cb8e4" strokeWidth="3.500" />
      <path d="M7 17 12 12 13 15 18 6" fill="none" stroke="#777" />
      <Dots at={[[2, 17], [9, 10], [17, 2]]} r={1.8} />
      <PlusMark />
    </g>
  ),
  surfaceSet: (
    <g>
      <path d="M0 8 7 2 19 9 13 15Z" fill={BLUE} stroke="#56789f" strokeWidth=".5" />
      <PlusMark />
    </g>
  ),
  solidSet: (
    <g>
      <path d="M0 4 5 2 14 3 10 6Z" fill="#bfdaf8" />
      <path d="M0 4 10 5.500V15L0 14Z" fill="#a3c8f5" stroke="#6c93c2" strokeWidth=".5" />
      <path d="M10 5.500 14 3V12L10 15Z" fill="#5f7fb0" />
      <PlusMark />
    </g>
  ),
  load: (
    <g>
      <Down x={5} y1={3} y2={16} />
      <path d="M0 17.500H20" stroke="#333" strokeWidth="1.800" />
    </g>
  ),
  situations: (
    <g>
      <rect x="0" y="1" width="7" height="5" fill="#5d94f0" />
      <rect x="0" y="14" width="7" height="5" fill="#2fc23e" />
      <path d="M8 3Q14 3 15 6M8 16.500Q14 17 15 13" fill="none" stroke="#333" strokeWidth="1.600" />
      <path d="M12 5 17 3 17 9ZM12 14 17 17 17 12Z" fill="#333" />
      <rect x="13" y="8" width="7" height="4" fill="#ff12ff" />
    </g>
  ),
  combos: (
    <g>
      <rect x=".5" y="1.500" width="6" height="4" fill="#fff" stroke="#333" />
      <rect x=".5" y="14.500" width="6" height="4" fill="#fff" stroke="#333" />
      <path d="M8 3Q14 3 15 6M8 16.500Q14 17 15 13" fill="none" stroke="#333" strokeWidth="1.600" />
      <path d="M12 5 17 3 17 9ZM12 14 17 17 17 12Z" fill="#333" />
      <rect x="13" y="8" width="7" height="4" fill="#2fc23e" />
    </g>
  ),
  analysis: (
    <g>
      <path d="M11 7 20 2V7Z" fill="#cc2a1a" />
      <path d="M0 7H12L0 11Z" fill="#2546b8" />
      <path d="M0 7H20" stroke="#222" strokeWidth="1.600" />
      <circle cx="15" cy="13" r="3" fill="#fff" stroke="#7f9be8" strokeWidth="2.200" />
      <circle cx="15" cy="13" r="4.500" fill="none" stroke="#7f9be8" strokeWidth="1.500" strokeDasharray="2 1.500" />
    </g>
  ),
  diagram: (
    <g fill="none">
      <path d="M2 1V18H19" stroke="#444" strokeWidth="1.300" />
      <path d="M4 13 8 7 11 13 17 1" stroke="#8cc4f0" strokeWidth="1.200" />
    </g>
  ),
};

// [level, label, icon, state] with state 'o' open, 'c' collapsed
const treeRows = [
  [1, 'RSF004.rf6*', 'file', 'o'],
  [2, 'Basisobjekte', 'folderOpen', 'o'],
  [3, 'Materialien', 'materials', 'c'],
  [3, 'Querschnitte', 'section'],
  [3, 'Dicken', 'thickness', 'c'],
  [3, 'Knoten', 'knot', 'c'],
  [3, 'Linien', 'line', 'c'],
  [3, 'Stäbe', 'member'],
  [3, 'Flächen', 'surface', 'o'],
  [4, '1 - 1,9,12 | Standard | Rotation'],
  [4, '2 - 2,12 | Standard | Rotation |'],
  [3, 'Öffnungen', 'opening'],
  [3, 'Volumenkörper', 'solid'],
  [3, 'Liniensätze', 'lineSet'],
  [3, 'Stabsätze', 'memberSet'],
  [3, 'Flächensätze', 'surfaceSet'],
  [3, 'Volumensätze', 'solidSet'],
  [2, 'Spezielle Objekte', 'folder', 'c'],
  [2, 'Typen für Knoten', 'folder', 'c'],
  [2, 'Typen für Linien', 'folder', 'c'],
  [2, 'Typen für Stäbe', 'folder', 'c'],
  [2, 'Typen für Flächen', 'folder', 'c'],
  [2, 'Typen für Volumenkörper', 'folder', 'c'],
  [2, 'Typen für spezielle Objekte', 'folder', 'c'],
  [2, 'Imperfektionen', 'folder', 'c'],
  [2, 'Lastfälle und Kombinationen', 'folderOpen', 'o'],
  [3, 'Lastfälle', 'load', 'c'],
  [3, 'Bemessungssituationen', 'situations'],
  [3, 'Lastkombinationen', 'combos'],
  [3, 'Statikanalyse-Einstellungen', 'analysis', 'c'],
  [2, 'Lastassistenten', 'folder', 'c'],
  [2, 'Lasten', 'folder', 'c'],
  [2, 'Berechnungsdiagramme', 'diagram'],
  [2, 'Ergebnisse', 'folder', 'c'],
  [2, '', 'folder'],
];

const indent = { 1: 'pl-0', 2: 'pl-[25px]', 3: 'pl-[50px]', 4: 'pl-[75px]' };

const TreeRow = ({ row, selected, onSelect }) => {
  const [level, label, icon, state] = row;
  const leaf = level === 4;
  return (
    <li role="treeitem" aria-selected={selected} className={`flex h-[23px] items-center ${indent[level]}`}>
      <span className={`flex shrink-0 justify-center ${leaf ? 'w-[26px]' : 'w-[22px]'}`}>
        {state === 'o' && <Chevron d="down" className="text-[#333]" />}
        {state === 'c' && <Chevron d="right" className="text-[#a0a0a0]" />}
      </span>
      <button
        onClick={onSelect}
        className={`flex h-[22px] items-center text-left whitespace-nowrap ${leaf ? 'min-w-0 flex-1 overflow-hidden border border-r-0 border-dotted pl-px' : 'pl-[6px]'} ${
          selected ? 'border-black bg-[#cce8ff]' : 'border-transparent'
        } ${level === 1 ? 'font-bold' : ''}`}
      >
        {leaf ? (
          <span className={`mr-[6px] size-[14px] shrink-0 ${selected ? 'bg-[#3c99f0]' : 'bg-[#55aaff]'}`} />
        ) : (
          <svg width="20" height="20" viewBox="0 0 20 20" className="mr-[6px] shrink-0">{treeIcons[icon]}</svg>
        )}
        {label}
      </button>
    </li>
  );
};

const RestoreIcon = () => (
  <svg width="11" height="11" viewBox="0 0 11 11" fill="none" stroke="#333">
    <path d="M3.500 3.500V.5H10.500V6.500H7.500M3 1.500H11" />
    <path d="M.5 4.500H7.500V10.500H.5ZM0 5.500H8" />
  </svg>
);

const CloseIcon = ({ w = 2 }) => (
  <svg width="10" height="10" viewBox="0 0 10 10" stroke="#333" strokeWidth={w}><path d="M1 1 9 9M9 1 1 9" /></svg>
);

const Navigator = () => {
  const [selected, setSelected] = useState(10);
  return (
    <aside className="flex w-[326px] shrink-0 flex-col pl-px">
      <header className="flex h-[25px] shrink-0 items-center bg-[#d8e6f2] pr-[9px] pl-[6px]">
        <h2 className="flex-1 pt-px text-sm font-semibold text-[#333]">Navigator - Daten</h2>
        <button aria-label="Abdocken" className="mr-[15px]"><RestoreIcon /></button>
        <button aria-label="Schließen"><CloseIcon /></button>
      </header>
      <div className="mt-px flex min-h-0 flex-1 flex-col border-2 border-b-0 border-[#c9c6d4] bg-white">
        <div className="flex min-h-0 flex-1 pr-px">
          <ul role="tree" className="min-w-0 flex-1 overflow-hidden">
            <li role="treeitem" className="flex h-[23px] items-center gap-[6px] pl-[3px]">
              <svg width="20" height="20" viewBox="0 0 20 20">{treeIcons.logo}</svg>
              RFEM
            </li>
            {treeRows.map((row, i) => (
              <TreeRow key={i} row={row} selected={i === selected} onSelect={() => setSelected(i)} />
            ))}
          </ul>
          <div className="flex w-5 shrink-0 flex-col bg-[#f0f0f0]">
            <span className="flex h-5 items-center justify-center"><Chevron d="up" /></span>
            <span className="flex-17 bg-[#cdcdcd]" />
            <span className="flex-1" />
            <span className="flex h-[21px] items-center justify-center"><Chevron d="down" /></span>
          </div>
        </div>
        <div className="mr-[21px] flex h-5 shrink-0 items-center bg-[#f0f0f0]">
          <span className="flex w-[21px] justify-center"><Chevron d="left" /></span>
          <span className="h-5 w-[142px] bg-[#cdcdcd]" />
          <span className="flex-1" />
          <span className="flex w-[21px] justify-center"><Chevron d="right" /></span>
        </div>
      </div>
      <div className="flex h-[31px] shrink-0 border border-l-2 border-[#c9c6d4]">
        <button aria-label="Daten" className="flex w-[38px] items-center justify-center bg-white">
          <svg width="22" height="22" viewBox="0 0 22 22">
            <rect x="6" y="2" width="15" height="12" fill="#c8c8c8" stroke="#777" />
            <rect x="6" y="1.500" width="15" height="5" fill="#4a8ae8" />
            <path d="M1 6H7L8.500 8H13V17H1Z" fill="#f0bb18" stroke="#a37c08" />
            <path d="M7 15Q11 8 21 10L15 20Q12 16 7 15Z" fill="#8fc0ee" stroke="#3f6694" strokeWidth=".7" />
            <Dots at={[[7, 15], [20, 10], [15, 19]]} r={1.4} />
          </svg>
        </button>
        <button aria-label="Anzeigen" className="flex h-7 w-[38px] items-center justify-center border border-t-0 border-[#c9c6d4] bg-[#efefef]">
          <svg width="18" height="14" viewBox="0 0 18 14"><Eye x={9} y={7} s={1.3} /></svg>
        </button>
        <button aria-label="Ansichten" className="flex h-7 w-10 items-center justify-center border border-t-0 border-[#c9c6d4] bg-[#efefef]">
          <svg width="18" height="12" viewBox="0 0 18 12" fill="#606060"><rect width="13" height="12" rx="2" /><path d="M12 6 18 1V11Z" /></svg>
        </button>
      </div>
    </aside>
  );
};

/* ---------- model view ---------- */

const TEAL = '#008080';

const Arrow = ({ x, y, a, c = TEAL, l = 9, w = 3 }) => (
  <path transform={`translate(${x} ${y}) rotate(${a})`} d={`M0 0L${-l} ${-w}V${w}Z`} fill={c} />
);

const Tag = ({ x, y, w = 9, h = 18, c, t, tx = 1 }) => (
  <g>
    <rect x={x} y={y} width={w} height={h} fill="#fff" fillOpacity=".5" />
    <text x={x + tx} y={y + 14} fontSize="12" fill={c}>{t}</text>
  </g>
);

const Callout = ({ x, y, c, t }) => (
  <text x={x} y={y} fontSize="31" fontWeight="500" fill={c} stroke="#fff" strokeWidth="7" strokeLinejoin="round" paintOrder="stroke" filter="url(#drop)">{t}</text>
);

const ModelView = () => (
  <svg viewBox="332 132 1067 890" className="block h-full w-full" fontFamily="Noto Sans, sans-serif">
    <defs>
      <linearGradient id="blue" x1="0" y1="0" x2="1" y2="1">
        <stop offset="0" stopColor="#b4d4f2" />
        <stop offset="1" stopColor="#456c9c" />
      </linearGradient>
      <linearGradient id="gray" x1="0" y1="0" x2="1" y2="1">
        <stop offset="0" stopColor="#dcdcdc" />
        <stop offset="1" stopColor="#8a8a8a" />
      </linearGradient>
      <linearGradient id="wall">
        <stop offset="0" stopColor="#a0a0a0" />
        <stop offset=".06" stopColor="#a6a6a6" />
        <stop offset=".17" stopColor="#9b9b9b" />
        <stop offset=".35" stopColor="#a0a0a0" />
        <stop offset=".55" stopColor="#a1a1a1" />
        <stop offset=".78" stopColor="#959595" />
        <stop offset=".92" stopColor="#a0a0a0" />
        <stop offset="1" stopColor="#a5a5a5" />
      </linearGradient>
      <linearGradient id="floor">
        <stop offset="0" stopColor="#c8c8c8" />
        <stop offset=".45" stopColor="#c4c4c4" />
        <stop offset=".8" stopColor="#b5b5b5" />
        <stop offset=".94" stopColor="#bfbfbf" />
        <stop offset="1" stopColor="#c6c6c6" />
      </linearGradient>
      <linearGradient id="shell" x1="0" y1="0" x2="1" y2=".15">
        <stop offset="0" stopColor="#b96666" />
        <stop offset=".45" stopColor="#b56161" />
        <stop offset=".8" stopColor="#a35a5a" />
        <stop offset="1" stopColor="#b96464" />
      </linearGradient>
      <linearGradient id="shellTop" x1="0" y1="0" x2="0" y2="1">
        <stop offset="0" stopColor="#7c4040" stopOpacity=".4" />
        <stop offset=".35" stopColor="#7c4040" stopOpacity="0" />
      </linearGradient>
      <linearGradient id="rim">
        <stop offset="0" stopColor="#ba7474" />
        <stop offset=".4" stopColor="#bb7878" />
        <stop offset=".8" stopColor="#a87070" />
        <stop offset="1" stopColor="#a36b6b" />
      </linearGradient>
      <filter id="drop" x="-40%" y="-40%" width="190%" height="190%">
        <feDropShadow dx="-1" dy="4" stdDeviation="2" floodOpacity=".55" />
      </filter>
    </defs>

    {/* cylinder */}
    <path d="M457.500 545V804A346.500 81 0 0 0 1150.500 804V545Z" fill="url(#wall)" />
    <ellipse cx="804" cy="804" rx="346.500" ry="81" fill="url(#floor)" />

    {/* dome */}
    <path
      d="M457.500 545 485 480 525 418 576 370 633 331 680 310 707 301 780 290 803 288 830 289 910 303 970 328 1038 373 1087 423 1127 486 1142 520 1150.500 545V551A346.500 81 0 0 1 457.500 551Z"
      fill="url(#shell)"
    />
    <path d="M457.500 545 485 480 525 418 576 370 633 331 680 310 707 301 780 290 803 288 830 289 910 303 970 328 1038 373 1087 423 1127 486 1142 520 1150.500 545Z" fill="url(#shellTop)" />
    <path d="M685 339 717 336 747 318 772 297 748 307 713 323Z" fill="#a45656" />
    <ellipse cx="804" cy="551" rx="346.500" ry="81" fill="url(#rim)" />
    <ellipse cx="804" cy="551" rx="346.500" ry="81" fill="none" stroke="#c9c2c2" strokeDasharray="11 5" />
    <path d="M1131 557C1070 595 940 614 804 614 600 614 463 580 463 536 463 500 590 455 804 455 960 455 1050 478 1093 491 1125 502 1148 530 1145 537L1138 550" fill="none" stroke="#ff7d7d" strokeDasharray="14 6" />
    <path d="M822 297C880 303 935 325 983 353 1042 393 1085 440 1115 492 1130 520 1138 540 1140 550" fill="none" stroke="#ff7d7d" strokeDasharray="14 6" />
    <path d="M822 300C880 308 930 328 974 358 1028 396 1064 440 1096 489 1112 514 1125 540 1131 557" fill="none" stroke="#ff7d7d" strokeDasharray="14 6" />
    <ellipse cx="804" cy="298" rx="19" ry="5" fill="none" stroke="#ff7d7d" strokeDasharray="8 4" />

    {/* centre marks */}
    <path d="M800 547l8 8M808 547l-8 8" stroke="#d8d0d0" />
    <path d="M800 646l8 8M808 646l-8 8" stroke="#777" />

    {/* dimension lines */}
    <g stroke={TEAL} strokeWidth="1.100" fill="none">
      <path d="M808 297 1318 328.500M1145 572 1318 582M1145 825 1318 835M1309 330V832" />
      <path d="M1140 825 1009 943M678 922.500 1010 942.500" />
      <path d="M717 884 671 924" />
      <path d="M796 813 717 884" strokeOpacity=".45" />
      <path d="M1034.500 353 1053 387M809 467 1000 478.500" />
      <path d="M995.500 478C998 445 1014 408 1051 385" />
    </g>
    <Arrow x={1309} y={328} a={-90} />
    <Arrow x={1309} y={582} a={90} />
    <Arrow x={1309} y={582} a={-90} />
    <Arrow x={1309} y={835} a={90} />
    <Arrow x={674} y={922} a={184} />
    <Arrow x={1011} y={942.5} a={4} />
    <Arrow x={1052} y={384} a={-25} l={10} />
    <Arrow x={995.5} y={479} a={92} l={10} />
    <g fill={TEAL} fontSize="13">
      <text x="838" y="950" fontSize="12">r</text>
      <text transform="translate(1327 462) rotate(-90)">h<tspan dy="3" fontSize="12">2</tspan></text>
      <text transform="translate(1327 715) rotate(-90)">h<tspan dy="3" fontSize="12">1</tspan></text>
    </g>
    <g transform="translate(1011.500 423) rotate(28)">
      <rect x="-10.500" y="-6" width="21" height="12" fill="#fff" />
      <text transform="rotate(-90)" x="-3" y="4" fontSize="12" fill={TEAL}>β</text>
    </g>

    {/* selected generating line */}
    <path d="M806 297C870 303 925 322 977 353 1035 390 1074 435 1106 487 1123 516 1133 545 1140 571" fill="none" stroke="#00ff00" strokeWidth="2" />
    <path d="M1140.500 571V824" stroke="#35e035" strokeWidth="1.700" />

    <Tag x={807} y={277} w={16} c="#f00" t="18" />
    <Tag x={1144} y={550} w={7} c="#f00" t="2" />
    <Tag x={1141} y={653} c="#00d800" t="1" tx={2} />
    <Tag x={1144} y={804} w={7} c="#f00" t="1" />
    <Tag x={476} y={571} c="#c4c4c4" t="4" />
    <Tag x={476} y={824} c="#aaa" t="3" />
    <Tag x={807} y={783} c="#f00" t="4" />
    <path d="M802 295h4v4h-4ZM1138.500 569.500h4v4h-4ZM1138.500 823h4v4h-4Z" fill="#f00" />

    {/* axes */}
    <path d="M804 804 834 806" stroke="#e80000" strokeWidth="2" />
    <Arrow x={843} y={807} a={4} c="#e80000" l={10} w={4} />
    <path d="M804 804V834" stroke="#0000f0" strokeWidth="2" />
    <Arrow x={804} y={843} a={90} c="#0000b8" l={10} w={4} />
    <path d="M804 804 798 809" stroke="#0f0" strokeWidth="2.500" />
    <Arrow x={792} y={814} a={139} c="#00ee00" l={9} w={4} />
    <circle cx="804" cy="804" r="3.500" fill="#ff0" />
    <g fontSize="13">
      <text x="849" y="812" fill="#f00">X</text>
      <text x="800" y="858" fill="#00f">Z</text>
      <text x="788" y="819" fill="#0f0" fontSize="12">Y</text>
    </g>

    <Callout x={775} y={277} c="#ff4545" t="R" />
    <Callout x={766} y={812} c="#ff4545" t="P" />
    <Callout x={973} y={347} c="#3ff56a" t="2" />
  </svg>
);

/* ---------- window frame ---------- */

const menus = ['Datei', 'Bearbeiten', 'Ansicht', 'Einfügen', 'Zuordnen', 'Berechnen', 'Ergebnisse', 'Extras', 'Optionen', 'Fenster', 'CAD-BIM', 'Hilfe'];

const TitleBar = () => (
  <header className="flex h-[37px] shrink-0 items-center bg-white pl-2">
    <svg width="22" height="22" viewBox="0 0 22 22">
      <path d="M3 8 9 2 17 3 20 9 15 18 9 15Z" fill="#8296b4" stroke="#33445f" />
      <path d="M6 5 12 9 17 15M9 3 15 8 18 12M4 9 11 6 16 3M8 13 13 10 20 8" fill="none" stroke="#33445f" />
      <text x="1" y="20" fontSize="14" fontWeight="800" fontFamily="Liberation Sans, sans-serif" fill="#c99c18" stroke="#7d6008" strokeWidth=".5">6</text>
    </svg>
    <h1 className="flex-1 pl-1 text-sm">Dlubal RFEM | 6.02.0049 | RSF004.rf6*</h1>
    <button aria-label="Minimieren" className="flex h-full w-[58px] items-center justify-center"><span className="h-px w-3 bg-black" /></button>
    <button aria-label="Maximieren" className="flex h-full w-[58px] items-center justify-center"><span className="size-3 border border-black" /></button>
    <button aria-label="Beenden" className="flex h-full w-[60px] items-center justify-center">
      <svg width="12" height="12" viewBox="0 0 12 12" stroke="#000"><path d="M0 0 12 12M12 0 0 12" /></svg>
    </button>
  </header>
);

const MenuBar = () => (
  <nav className="flex h-6 shrink-0 items-center">
    <svg width="20" height="20" viewBox="0 0 20 20" className="mr-2"><Logo /></svg>
    <div className="flex flex-1 gap-4 pt-px">
      {menus.map((m) => <button key={m}>{m}</button>)}
    </div>
    <div className="flex items-center gap-[13px] pr-[7px]">
      <button aria-label="Fenster minimieren" className="flex h-3 items-end"><span className="h-[2px] w-[9px] bg-[#333]" /></button>
      <button aria-label="Fenster wiederherstellen"><RestoreIcon /></button>
      <button aria-label="Fenster schließen"><CloseIcon w={2.5} /></button>
    </div>
  </nav>
);

const Toggle = ({ label, on, className }) => (
  <button aria-pressed={on} className={`h-6 border-t border-l pt-px text-center ${on ? 'border-[#b4b4b4] bg-[#ebebeb]' : 'border-transparent'} ${className}`}>
    {label}
  </button>
);

const cell = 'h-6 border-r border-[#d8d8d8]';

const StatusBar = () => (
  <footer className="flex h-[27px] shrink-0 items-end pb-px pl-[344px]">
    <div className="flex w-[218px] shrink-0 gap-[2px] border-r border-[#d8d8d8]">
      <Toggle label="FANG" on className="w-[41px]" />
      <Toggle label="RASTER" className="w-14" />
      <Toggle label="LRASTER" on className="w-[61px]" />
      <Toggle label="OFANG" on className="w-[53px]" />
    </div>
    <span className={`${cell} w-[129px]`} />
    <span className={`${cell} min-w-0 flex-1`} />
    <span className={`${cell} w-[194px] pl-1 leading-6`}>KS: Global XYZ</span>
    <span className={`${cell} w-[81px] pl-1 leading-6`}>Ebene: XY</span>
    <span className={`${cell} w-[94px]`} />
    <span className={`${cell} w-[94px]`} />
    <span className={`${cell} w-[94px]`} />
    <span className="flex h-6 w-[19px] items-end justify-end p-1">
      <svg width="11" height="11" viewBox="0 0 11 11" fill="#bbb"><path d="M8 0h3v3H8ZM8 4h3v3H8ZM8 8h3v3H8ZM4 4h3v3H4ZM4 8h3v3H4ZM0 8h3v3H0Z" /></svg>
    </span>
  </footer>
);

export default function App() {
  return (
    <div className="flex h-screen w-full flex-col overflow-hidden border border-[#6e6e6e] bg-[#f7f7f7] font-['Noto_Sans',sans-serif] text-xs text-black">
      <TitleBar />
      <MenuBar />
      <ToolbarTop />
      <ToolbarBottom />
      <main className="flex min-h-0 flex-1">
        <Navigator />
        <section aria-label="Modell" className="ml-[5px] min-w-0 flex-1 bg-white">
          <ModelView />
        </section>
      </main>
      <StatusBar />
    </div>
  );
}
